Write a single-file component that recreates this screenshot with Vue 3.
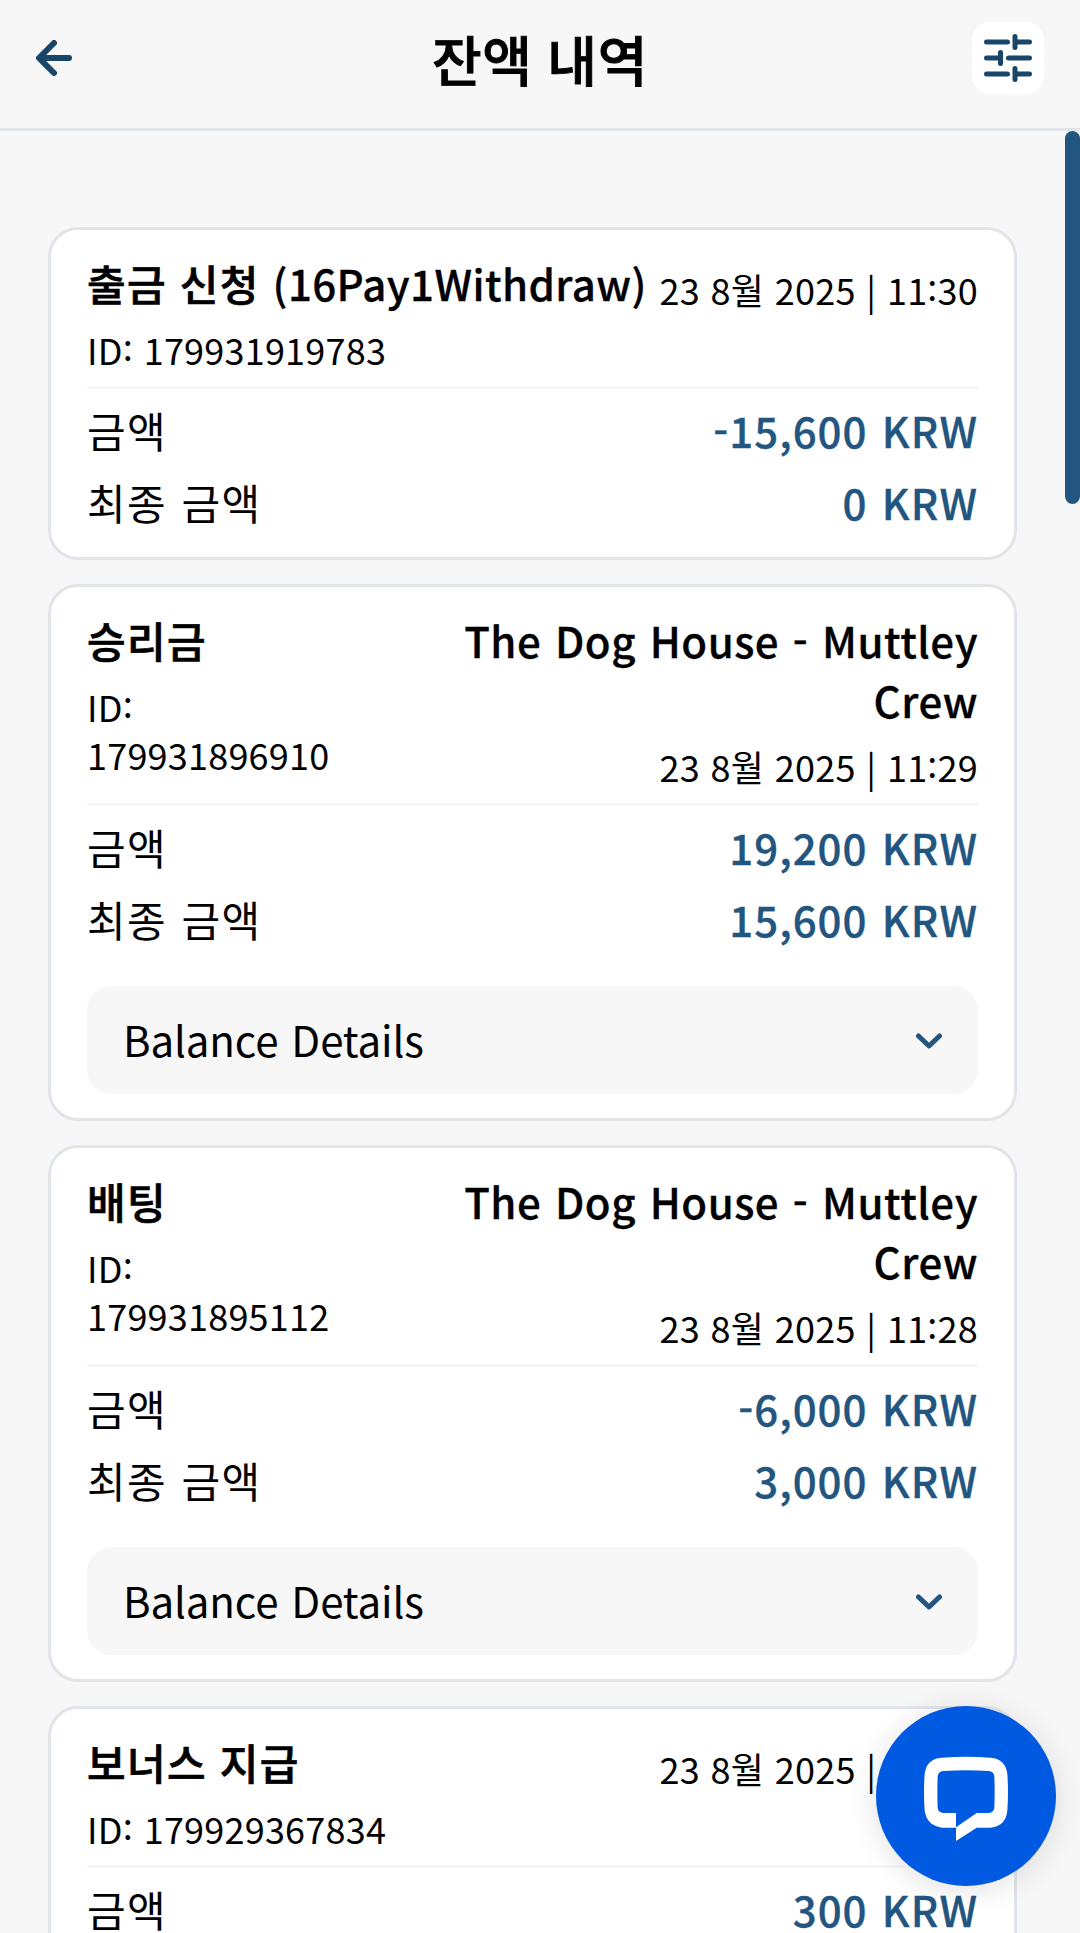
<template>
  <div class="page">
    <!-- 상단 헤더 -->
    <header class="header">
      <button class="icon-btn" aria-label="back">
        <svg class="icon-back" viewBox="0 0 36 36">
          <path d="M33 18H4M18 3L3 18L18 33" />
        </svg>
      </button>
      <h1 class="header-title">잔액 내역</h1>
      <button class="icon-btn filter" aria-label="filter">
        <svg class="icon-tune" viewBox="0 0 48 48">
          <path d="M2.5 8H23.5M31 2.5V13.5M31 8H45.5" />
          <path d="M2.5 24H16.5M16.5 18.5V29.5M24.5 24H45.5" />
          <path d="M2.5 40H23.5M31 34.5V45.5M31 40H45.5" />
        </svg>
      </button>
    </header>

    <!-- 거래 목록 -->
    <main class="list">
      <section v-for="item in items" :key="item.id" class="card">
        <div class="card-head" :class="{ split: item.game }">
          <div class="head-left">
            <div class="card-type">
              {{ item.type }} <span v-if="item.method" class="card-title">({{ item.method }})</span>
            </div>
            <div class="card-id">ID<span class="raised">:</span> {{ item.id }}</div>
          </div>
          <div class="head-right">
            <div v-if="item.game" class="card-title">
              {{ item.game }} <span class="raised">-</span> {{ item.edition }}
            </div>
            <div class="card-date">
              {{ item.date }} | {{ item.hour }}<span class="raised">:</span>{{ item.minute }}
            </div>
          </div>
        </div>
        <div class="card-body">
          <div class="row">
            <span>금액</span>
            <span class="amount">
              <span v-if="item.minus" class="raised">-</span>{{ item.amount }} KRW
            </span>
          </div>
          <div class="row">
            <span>최종 금액</span>
            <span class="amount">{{ item.total }} KRW</span>
          </div>
        </div>
        <button v-if="item.game" class="details" @click="toggle(item.id)">
          <span>Balance Details</span>
          <svg class="icon-chevron" :class="{ open: opened[item.id] }" viewBox="0 0 26 16">
            <path d="M2.5 3L13 13L23.5 3" />
          </svg>
        </button>
      </section>
    </main>

    <div class="scroll-thumb"></div>

    <!-- 채팅 버튼 -->
    <button class="chat" aria-label="chat">
      <svg viewBox="0 0 540 540">
        <path
          fill-rule="evenodd"
          d="M196 155Q270 150 344 155Q389 159 394 204Q398 259 394 314Q389 360 344 365H302L240 405V365H200Q153 360 146 314Q142 259 146 204Q151 159 196 155ZM202 195Q270 191 338 195Q353 196 355 211Q357 259 355 306Q353 320 338 321H302L240 364V321H202Q187 320 185 306Q183 259 185 211Q187 196 202 195Z"
        />
      </svg>
    </button>
  </div>
</template>

<script setup>
import { ref } from 'vue'

// 거래 내역 데이터
const items = [
  {
    id: '179931919783',
    type: '출금 신청',
    method: '16Pay1Withdraw',
    date: '23 8월 2025',
    hour: '11',
    minute: '30',
    minus: true,
    amount: '15,600',
    total: '0'
  },
  {
    id: '179931896910',
    type: '승리금',
    game: 'The Dog House',
    edition: 'Muttley Crew',
    date: '23 8월 2025',
    hour: '11',
    minute: '29',
    amount: '19,200',
    total: '15,600'
  },
  {
    id: '179931895112',
    type: '배팅',
    game: 'The Dog House',
    edition: 'Muttley Crew',
    date: '23 8월 2025',
    hour: '11',
    minute: '28',
    minus: true,
    amount: '6,000',
    total: '3,000'
  },
  {
    id: '179929367834',
    type: '보너스 지급',
    date: '23 8월 2025',
    hour: '11',
    minute: '27',
    amount: '300',
    total: '300'
  }
]

// 펼쳐진 항목, key 는 거래 id
const opened = ref({})

const toggle = (id) => {
  opened.value[id] = !opened.value[id]
}
</script>

<style>
body {
  background: #f7f7f8;
}
</style>

<style scoped>
.page {
  position: relative;
  display: flex;
  flex-direction: column;
  height: 1933px;
  overflow: hidden;
  background: #f7f7f8;
  color: #000;
  font-family: 'Noto Sans CJK KR', 'Noto Sans', sans-serif;
  font-size: 42px;
  line-height: 60px;
  letter-spacing: 1.35px;
  word-spacing: 3.8px;
}
button {
  border: none;
  padding: 0;
  background: none;
  color: inherit;
  font: inherit;
  word-spacing: inherit;
}
svg {
  display: block;
  fill: none;
  stroke-linecap: round;
  stroke-linejoin: round;
}
.header {
  box-sizing: border-box;
  flex: none;
  display: flex;
  align-items: flex-start;
  justify-content: space-between;
  height: 131px;
  padding: 22px 36px 0;
  border-bottom: 3px solid #e1e4e8;
}
.header-title {
  margin: 0;
  font-size: 54px;
  font-weight: 500;
  line-height: 73px;
  letter-spacing: 0.6px;
  word-spacing: 2px;
  -webkit-text-stroke: 0.9px currentColor;
}
.icon-btn {
  display: flex;
  align-items: center;
  width: 72px;
  height: 72px;
}
.filter {
  justify-content: center;
  border-radius: 18px;
  background: #fff;
}
.icon-back {
  width: 36px;
  height: 36px;
  stroke: #194569;
  stroke-width: 6;
}
.icon-tune {
  width: 48px;
  height: 48px;
  stroke: #194569;
  stroke-width: 5;
}
.list {
  display: flex;
  flex-direction: column;
  gap: 24px;
  padding: 96px 63px 0 48px;
}
.card {
  flex: none;
  padding: 23px 36px 24px;
  border: 3px solid #e1e4e8;
  border-radius: 30px;
  background: #fff;
}
.card-head {
  display: flex;
  justify-content: space-between;
  padding-bottom: 13px;
  border-bottom: 3px solid #f7f7f8;
  white-space: nowrap;
}
.card-head.split {
  white-space: normal;
}
.split .head-left {
  width: 270px;
}
.split .head-right {
  width: 540px;
}
.head-right {
  text-align: right;
}
.card-type {
  font-weight: 500;
  word-spacing: 2px;
  -webkit-text-stroke: 0.7px currentColor;
}
.card-title {
  font-weight: 500;
  letter-spacing: 0.5px;
  -webkit-text-stroke: 0.3px currentColor;
}
.card-type .card-title {
  letter-spacing: 0.4px;
}
.card-id,
.card-date {
  margin-top: 12px;
  font-size: 36px;
  line-height: 48px;
  letter-spacing: 0.22px;
  word-spacing: 2.4px;
}
/* 콜론과 하이픈을 숫자 높이의 가운데로 올림 */
.raised {
  line-height: 0;
  vertical-align: 4px;
}
.card-body {
  display: flex;
  flex-direction: column;
  gap: 12px;
  padding: 11px 0 1px;
}
.row {
  display: flex;
  justify-content: space-between;
}
.amount {
  color: #225680;
  font-weight: 500;
  letter-spacing: 1px;
  -webkit-text-stroke: 0.3px currentColor;
}
.details {
  display: flex;
  align-items: center;
  justify-content: space-between;
  width: 100%;
  height: 108px;
  margin-top: 36px;
  padding: 0 36px 2px;
  border-radius: 24px;
  background: #f7f7f8;
  letter-spacing: -0.12px;
}
.icon-chevron {
  width: 26px;
  height: 16px;
  margin-top: 4px;
  stroke: #225680;
  stroke-width: 5;
}
.icon-chevron.open {
  transform: rotate(180deg);
}
.scroll-thumb {
  position: absolute;
  top: 131px;
  right: 0;
  width: 15px;
  height: 373px;
  border-radius: 8px;
  background: #225680;
}
.chat {
  position: absolute;
  right: 24px;
  bottom: 47px;
  width: 180px;
  height: 180px;
  border-radius: 50%;
  background: #0059e1;
  box-shadow: 0 4px 30px rgba(0, 0, 0, 0.12);
}
.chat path {
  fill: #fff;
}
</style>
